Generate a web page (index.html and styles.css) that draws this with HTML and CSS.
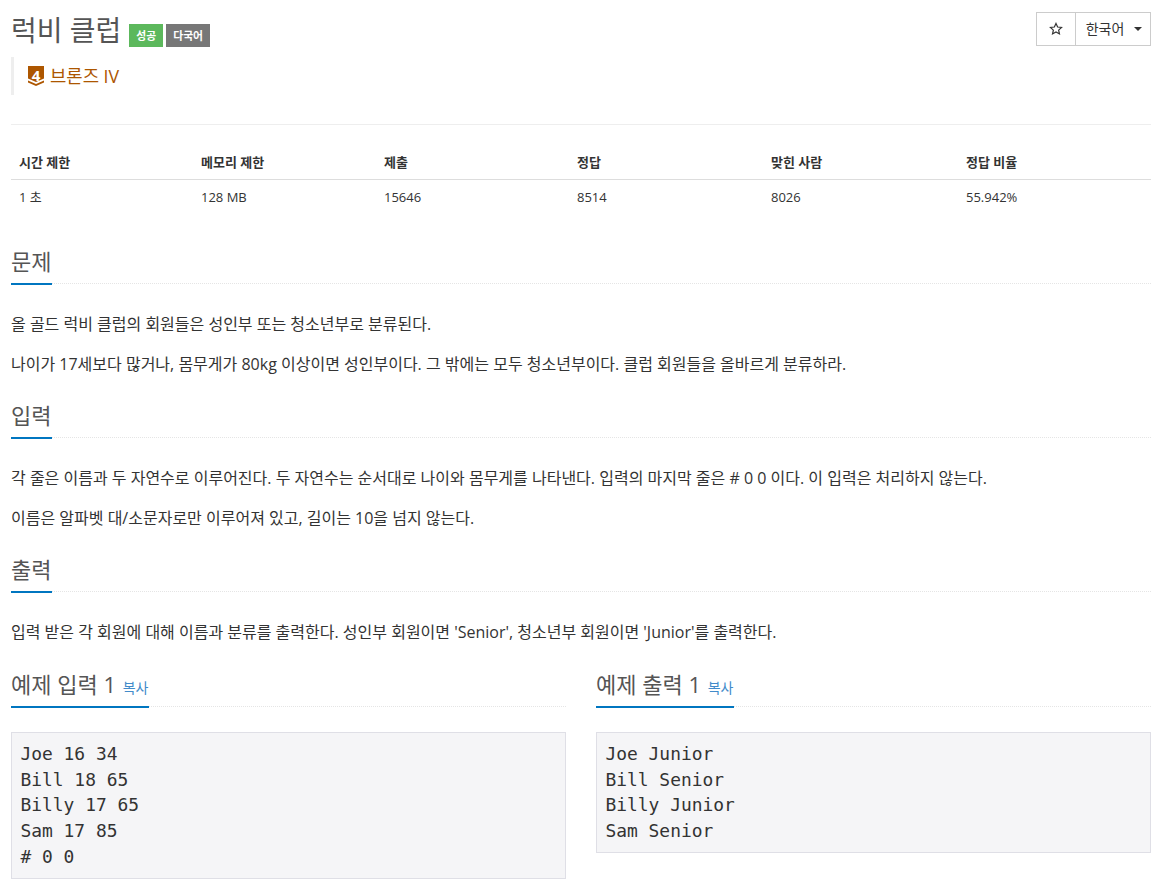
FILE: index.html
```html
<!DOCTYPE html>
<html lang="ko">
<head>
<meta charset="utf-8">
<title>럭비 클럽</title>
<link rel="stylesheet" href="styles.css">
</head>
<body>
<header class="page-header">
  <div class="title-row">
    <h1 class="title">럭비 클럽</h1>
    <span class="label label-success">성공</span>
    <span class="label label-gray">다국어</span>
  </div>
  <div class="btn-group">
    <button class="btn btn-star" type="button">
      <svg class="star" viewBox="0 0 14 14" width="14" height="14"><path d="M7 1.4l1.65 3.6 3.9.45-2.9 2.65.8 3.85L7 10l-3.45 1.95.8-3.85-2.9-2.65 3.9-.45z" fill="none" stroke="#333" stroke-width="1.2" stroke-linejoin="miter"/></svg>
    </button>
    <button class="btn btn-lang" type="button">한국어<span class="caret"></span></button>
  </div>
</header>
<blockquote class="tier">
  <svg class="tier-icon" viewBox="0 0 16 20" width="16" height="20">
    <path d="M0 0H16V12.5L8 16 0 12.5Z" fill="#ad5600"/>
    <path d="M0 14.5L8 18 16 14.5V16.5L8 20 0 16.5Z" fill="#ad5600"/>
  </svg>
  <span class="tier-digit">4</span>
  <span class="tier-name">브론즈 IV</span>
</blockquote>
<hr class="rule">
<table class="info">
  <colgroup>
    <col class="c1"><col class="c2"><col class="c3"><col class="c4"><col class="c5"><col class="c6">
  </colgroup>
  <thead>
    <tr><th>시간 제한</th><th>메모리 제한</th><th>제출</th><th>정답</th><th>맞힌 사람</th><th>정답 비율</th></tr>
  </thead>
  <tbody>
    <tr><td>1 초</td><td>128 MB</td><td>15646</td><td>8514</td><td>8026</td><td>55.942%</td></tr>
  </tbody>
</table>
<section class="section first">
  <div class="headline"><h2>문제</h2></div>
  <p>올 골드 럭비 클럽의 회원들은 성인부 또는 청소년부로 분류된다.</p>
  <p>나이가 17세보다 많거나, 몸무게가 80kg 이상이면 성인부이다. 그 밖에는 모두 청소년부이다. 클럽 회원들을 올바르게 분류하라.</p>
</section>
<section class="section">
  <div class="headline"><h2>입력</h2></div>
  <p>각 줄은 이름과 두 자연수로 이루어진다. 두 자연수는 순서대로 나이와 몸무게를 나타낸다. 입력의 마지막 줄은 # 0 0 이다. 이 입력은 처리하지 않는다.</p>
  <p>이름은 알파벳 대/소문자로만 이루어져 있고, 길이는 10을 넘지 않는다.</p>
</section>
<section class="section">
  <div class="headline"><h2>출력</h2></div>
  <p>입력 받은 각 회원에 대해 이름과 분류를 출력한다. 성인부 회원이면 'Senior', 청소년부 회원이면 'Junior'를 출력한다.</p>
</section>
<div class="samples">
  <section class="sample">
    <div class="headline"><h2>예제 입력 1 <a class="copy">복사</a></h2></div>
    <pre>Joe 16 34
Bill 18 65
Billy 17 65
Sam 17 85
# 0 0</pre>
  </section>
  <section class="sample">
    <div class="headline"><h2>예제 출력 1 <a class="copy">복사</a></h2></div>
    <pre>Joe Junior
Bill Senior
Billy Junior
Sam Senior</pre>
  </section>
</div>
</body>
</html>
```
FILE: styles.css
```css
* { box-sizing: border-box; }
html, body { margin: 0; padding: 0; }
body {
  padding: 0 14px 0 11px;
  background: #fff;
  color: #333;
  font-family: "Open Sans", "Noto Sans CJK KR", sans-serif;
  font-size: 14px;
  line-height: 20px;
  overflow: hidden;
}
.page-header {
  display: flex;
  justify-content: space-between;
  align-items: flex-start;
  padding-top: 13px;
}
.title-row { display: flex; align-items: center; height: 34px; }
.title {
  margin: 0 8px 0 0;
  font-size: 28px;
  line-height: 34px;
  font-weight: 400;
  color: #555;
}
.label {
  display: inline-block;
  height: 23px;
  margin-top: 11px;
  margin-right: 3px;
  padding: 0 7px;
  color: #fff;
  font-size: 10.8px;
  font-weight: 700;
  line-height: 23px;
}
.label-success { background: #5cb85c; }
.label-gray { background: #777; }
.btn-group { display: flex; margin-top: -1px; }
.btn {
  height: 34px;
  padding: 0;
  background: #fff;
  border: 1px solid #ccc;
  color: #333;
  font: inherit;
  font-size: 14px;
  display: flex;
  align-items: center;
  justify-content: center;
}
.btn-star { width: 40px; }
.star { display: block; }
.btn-lang { width: 76px; margin-left: -1px; padding-left: 2px; }
.caret {
  display: inline-block;
  margin-left: 10px;
  border-top: 4px solid #333;
  border-left: 4px solid transparent;
  border-right: 4px solid transparent;
}
.tier {
  position: relative;
  display: flex;
  align-items: center;
  height: 38px;
  margin: 10px 0 0;
  padding-left: 14px;
  border-left: 3px solid #eee;
}
.tier-icon { display: block; margin-right: 6px; }
.tier-digit {
  position: absolute;
  left: 14px;
  top: 9px;
  width: 16px;
  text-align: center;
  color: #fff;
  font-size: 15px;
  font-weight: 700;
  line-height: 18px;
}
.tier-name { color: #ad5600; font-size: 17.75px; }
.rule { height: 0; margin: 29px 0 0; border: 0; border-top: 1px solid #eee; }
.info {
  width: 100%;
  margin-top: 19px;
  border-collapse: collapse;
  table-layout: fixed;
  font-size: 13px;
}
.c1 { width: 182px; } .c2 { width: 183px; } .c3 { width: 193px; }
.c4 { width: 194px; } .c5 { width: 195px; } .c6 { width: 193px; }
.info th {
  height: 35px;
  padding: 1px 8px 0;
  text-align: left;
  font-weight: 700;
  border-bottom: 1px solid #ddd;
}
.info td { height: 35px; padding: 0 8px; }
.section { margin-top: 23px; }
.section.first { margin-top: 31px; }
.headline { border-bottom: 1px dotted #e5e5e5; height: 39px; }
.headline h2 {
  display: inline-block;
  height: 40px;
  margin: 0;
  padding-right: 1px;
  font-size: 22px;
  line-height: 32px;
  font-weight: 400;
  color: #555;
  border-bottom: 2px solid #0076c0;
}
.section p { margin: 0; font-size: 16px; line-height: 24px; color: #333; }
.section .headline + p { margin-top: 28px; }
.section p + p { margin-top: 16px; }
.samples { display: grid; grid-template-columns: 555px 555px; column-gap: 30px; margin-top: 24px; align-items: start; }
.copy { color: #428bca; font-size: 14px; margin-left: 1px; }
pre {
  margin: 25px 0 0;
  padding: 8px 8.5px;
  background: #f5f5f7;
  border: 1px solid #dfdfe6;
  color: #333;
  font-family: "DejaVu Sans Mono", monospace;
  font-size: 17.9px;
  line-height: 25.71px;
}
```
